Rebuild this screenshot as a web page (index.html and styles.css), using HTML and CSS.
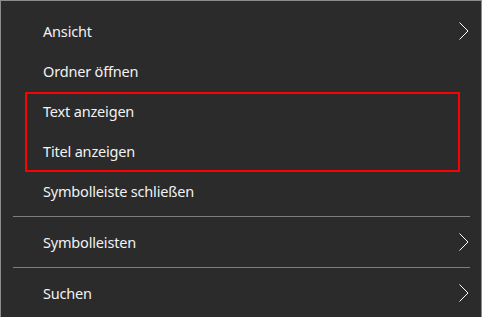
FILE: index.html
```html
<!DOCTYPE html>
<html lang="de">
<head>
<meta charset="utf-8">
<link rel="stylesheet" href="styles.css">
</head>
<body>
<div class="menu">
  <div class="item"><span>Ansicht</span><svg class="chev" viewBox="0 0 10 18" width="10" height="18"><polyline points="0.5,0.5 9,9 0.5,17.5"/></svg></div>
  <div class="item"><span>Ordner öffnen</span></div>
  <div class="item"><span>Text anzeigen</span></div>
  <div class="item"><span>Titel anzeigen</span></div>
  <div class="item"><span>Symbolleiste schließen</span></div>
  <div class="sep"></div>
  <div class="item"><span>Symbolleisten</span><svg class="chev" viewBox="0 0 10 18" width="10" height="18"><polyline points="0.5,0.5 9,9 0.5,17.5"/></svg></div>
  <div class="sep"></div>
  <div class="item"><span>Suchen</span><svg class="chev" viewBox="0 0 10 18" width="10" height="18"><polyline points="0.5,0.5 9,9 0.5,17.5"/></svg></div>
  <div class="highlight"></div>
</div>
</body>
</html>
```

FILE: styles.css
```css
html, body {
  margin: 0;
  padding: 0;
  background: #2b2b2b;
}
.menu {
  position: relative;
  box-sizing: border-box;
  width: 482px;
  height: 317px;
  overflow: hidden;
  background: #2b2b2b;
  border: 1px solid #8c8c8c;
  border-bottom: none;
  padding-top: 10px;
  font-family: "Noto Sans", "Open Sans", sans-serif;
  font-size: 14.5px;
  letter-spacing: -0.18px;
  color: #f2f2f2;
}
.item {
  height: 40px;
  display: flex;
  align-items: center;
  justify-content: space-between;
  padding: 0 12px 0 42px;
}
.item span {
  line-height: 20px;
}
.chev {
  display: block;
}
.chev polyline {
  fill: none;
  stroke: #ffffff;
  stroke-width: 1;
}
.sep {
  height: 1px;
  background: #7e7e7e;
  margin: 5px 11px 5px 12px;
}
.highlight {
  position: absolute;
  left: 24px;
  top: 91px;
  width: 431px;
  height: 76px;
  border: 2px solid #ff0000;
}
```
